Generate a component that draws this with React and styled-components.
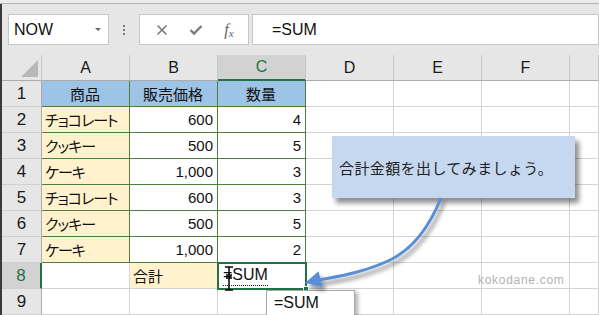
import React from 'react';
import styled, { createGlobalStyle } from 'styled-components';

const GlobalStyle = createGlobalStyle`
    html, body {
        margin: 0;
        padding: 0;
        background: #fff;
        overflow: hidden;
    }
    body {
        font-family: "Liberation Sans", Arial, sans-serif;
    }
`;

const GREEN = '#217346';
const TABLE_LINE = '#4f7d3c';
const GRID_LINE = '#d4d4d4';
const JP = '"Noto Sans CJK JP", "Liberation Sans", sans-serif';

const Frame = styled.div`
    position: relative;
    width: 599px;
    height: 315px;
    overflow: hidden;
    display: flex;
    flex-direction: column;
`;

const TopStrip = styled.div`
    height: 3px;
    background: #ebebeb;
    border-bottom: 1px solid #b3b3b3;
`;

const Body = styled.div`
    flex: 1;
    display: flex;
    flex-direction: column;
    border-left: 2px solid #3a3a3a;
    background: #e6e6e6;
`;

const Toolbar = styled.div`
    display: flex;
    align-items: stretch;
    height: 31px;
    padding: 10px 0 10px 6px;
`;

const NameBox = styled.div`
    width: 101px;
    box-sizing: border-box;
    background: #fff;
    border: 1px solid #c6c6c6;
    display: flex;
    align-items: center;
    justify-content: space-between;
    padding: 0 7px 0 5px;
    font-size: 16px;
    color: #111;
`;

const Caret = styled.span`
    width: 0;
    height: 0;
    border-left: 3px solid transparent;
    border-right: 3px solid transparent;
    border-top: 3px solid #666;
`;

const Grip = styled.div`
    width: 30px;
    display: flex;
    flex-direction: column;
    align-items: center;
    justify-content: center;
    gap: 2px;
    span {
        width: 2px;
        height: 2px;
        background: #7a7a7a;
    }
`;

const ButtonBox = styled.div`
    width: 110px;
    box-sizing: border-box;
    background: #fff;
    border: 1px solid #c6c6c6;
    display: flex;
    align-items: center;
    justify-content: space-around;
    padding: 0 4px 0 6px;
    margin-right: 3px;
    color: #7a7a7a;
`;

const Fx = styled.span`
    font-family: "Liberation Serif", "DejaVu Serif", serif;
    font-style: italic;
    font-size: 16px;
    color: #666;
    sub {
        font-size: 11px;
        vertical-align: -2px;
    }
`;

const FormulaBar = styled.div`
    flex: 1;
    box-sizing: border-box;
    background: #fff;
    border: 1px solid #c6c6c6;
    display: flex;
    align-items: center;
    padding-left: 19px;
    font-size: 16px;
    color: #111;
`;

const Sheet = styled.div`
    display: grid;
    grid-template-columns: 40px repeat(6, 88px) 1fr;
    grid-auto-rows: 26px;
    background: #fff;
`;

const ColHead = styled.div`
    box-sizing: border-box;
    display: flex;
    align-items: center;
    justify-content: center;
    font-size: 16px;
    background: ${p => (p.$active ? '#d2d2d2' : '#e6e6e6')};
    color: ${p => (p.$active ? GREEN : '#1a1a1a')};
    border-right: 1px solid #c8c8c8;
    border-bottom: ${p => (p.$active ? `2px solid ${GREEN}` : '1px solid #ababab')};
`;

const Corner = styled.div`
    box-sizing: border-box;
    background: #e6e6e6;
    border-right: 1px solid #c8c8c8;
    border-bottom: 1px solid #ababab;
    display: flex;
    align-items: flex-end;
    justify-content: flex-end;
    padding: 0 3px 3px 0;
    &::after {
        content: '';
        width: 0;
        height: 0;
        border-left: 17px solid transparent;
        border-bottom: 17px solid #b8b8b8;
    }
`;

const RowHead = styled.div`
    box-sizing: border-box;
    display: flex;
    align-items: center;
    justify-content: center;
    font-size: 17px;
    background: ${p => (p.$active ? '#d2d2d2' : '#e6e6e6')};
    color: ${p => (p.$active ? GREEN : '#1a1a1a')};
    border-right: ${p => (p.$active ? `2px solid ${GREEN}` : '1px solid #ababab')};
    border-bottom: 1px solid #d0d0d0;
`;

const Cell = styled.div`
    box-sizing: border-box;
    display: flex;
    align-items: center;
    justify-content: ${p => p.$align || 'flex-start'};
    padding: 0 4px 0 3px;
    white-space: nowrap;
    overflow: visible;
    font-family: ${p => (p.$jp ? JP : '"Liberation Sans", Arial, sans-serif')};
    font-feature-settings: "palt";
    letter-spacing: ${p => (p.$tight ? '-1px' : 'normal')};
    font-size: 15px;
    color: #111;
    background: ${p => p.$bg || '#fff'};
    border-right: 1px solid ${p => (p.$table ? TABLE_LINE : GRID_LINE)};
    border-bottom: 1px solid ${p => (p.$table ? TABLE_LINE : GRID_LINE)};
`;

const EditCell = styled(Cell)`
    position: relative;
    outline: 2px solid ${GREEN};
    outline-offset: -1px;
    padding-left: 5px;
    font-size: 16px;
    z-index: 1;
    &::after {
        content: '';
        position: absolute;
        right: -4px;
        bottom: -4px;
        width: 4px;
        height: 4px;
        background: ${GREEN};
        border: 1px solid #fff;
    }
`;

const Underlined = styled.span`
    border-bottom: 1px dotted #222;
    padding-bottom: 1px;
`;

const Callout = styled.div`
    position: absolute;
    left: 332px;
    top: 136px;
    width: 243px;
    height: 62px;
    box-sizing: border-box;
    background: #c6d8ef;
    box-shadow: 4px 5px 5px rgba(0, 0, 0, 0.45);
    display: flex;
    align-items: center;
    padding-left: 7px;
    font-family: ${JP};
    font-size: 15px;
    letter-spacing: 0.4px;
    color: #222;
    z-index: 2;
`;

const Overlay = styled.svg`
    position: absolute;
    left: 0;
    top: 0;
    pointer-events: none;
    z-index: 3;
`;

const Tooltip = styled.div`
    position: absolute;
    left: 266px;
    top: 290px;
    width: 89px;
    height: 30px;
    box-sizing: border-box;
    background: #fff;
    border: 1px solid #a9a9a9;
    box-shadow: 3px 2px 4px rgba(0, 0, 0, 0.3);
    padding: 3px 0 0 7px;
    font-size: 16px;
    color: #111;
    z-index: 2;
`;

const Watermark = styled.div`
    position: absolute;
    left: 478px;
    top: 273px;
    font-size: 12px;
    letter-spacing: 0.7px;
    color: #b2b2b2;
    z-index: 2;
`;

const columns = ['A', 'B', 'C', 'D', 'E', 'F', ''];

const items = [
    ['チョコレート', '600', '4'],
    ['クッキー', '500', '5'],
    ['ケーキ', '1,000', '3'],
    ['チョコレート', '600', '3'],
    ['クッキー', '500', '5'],
    ['ケーキ', '1,000', '2'],
];

function Blanks({ count }) {
    return Array.from({ length: count }, (_, i) => <Cell key={i} />);
}

export default function App() {
    return (
        <Frame>
            <GlobalStyle />
            <TopStrip />
            <Body>
                <Toolbar>
                    <NameBox>
                        NOW
                        <Caret />
                    </NameBox>
                    <Grip>
                        <span />
                        <span />
                        <span />
                    </Grip>
                    <ButtonBox>
                        <svg width="12" height="12" viewBox="0 0 12 12">
                            <path d="M1.5 1.5 L10.5 10.5 M10.5 1.5 L1.5 10.5" stroke="#7a7a7a" strokeWidth="1.6" />
                        </svg>
                        <svg width="14" height="12" viewBox="0 0 14 12">
                            <path d="M1.5 6 L5 9.5 L12.5 2" stroke="#7a7a7a" strokeWidth="2.4" fill="none" />
                        </svg>
                        <Fx>f<sub>x</sub></Fx>
                    </ButtonBox>
                    <FormulaBar>=SUM</FormulaBar>
                </Toolbar>

                <Sheet>
                    <Corner />
                    {columns.map((c, i) => (
                        <ColHead key={i} $active={c === 'C'}>{c}</ColHead>
                    ))}

                    <RowHead>1</RowHead>
                    <Cell $jp $table $bg="#9dc3e6" $align="center">商品</Cell>
                    <Cell $jp $table $bg="#9dc3e6" $align="center">販売価格</Cell>
                    <Cell $jp $table $bg="#9dc3e6" $align="center">数量</Cell>
                    <Blanks count={4} />

                    {items.map((row, i) => (
                        <React.Fragment key={i}>
                            <RowHead>{i + 2}</RowHead>
                            <Cell $jp $tight $table $bg="#fff2cc">{row[0]}</Cell>
                            <Cell $table $align="flex-end">{row[1]}</Cell>
                            <Cell $table $align="flex-end">{row[2]}</Cell>
                            <Blanks count={4} />
                        </React.Fragment>
                    ))}

                    <RowHead $active>8</RowHead>
                    <Cell />
                    <Cell $jp $bg="#fff2cc">合計</Cell>
                    <EditCell>
                        <Underlined>=SUM</Underlined>
                    </EditCell>
                    <Blanks count={4} />

                    <RowHead>9</RowHead>
                    <Blanks count={7} />
                </Sheet>
            </Body>

            <Callout>合計金額を出してみましょう。</Callout>
            <Tooltip>=SUM</Tooltip>
            <Watermark>kokodane.com</Watermark>

            <Overlay width="599" height="315" viewBox="0 0 599 315">
                <defs>
                    <filter id="arrowShadow" x="-20%" y="-20%" width="140%" height="140%">
                        <feDropShadow dx="3" dy="4" stdDeviation="2" floodColor="#000" floodOpacity="0.45" />
                    </filter>
                </defs>
                <g filter="url(#arrowShadow)">
                    <path
                        d="M441 198 C430 225 415 248 390 260 C365 272 340 276 319 280"
                        stroke="#5a8fd5"
                        strokeWidth="3"
                        fill="none"
                    />
                    <polygon points="305,283 318.6,271.3 322.4,287" fill="#5a8fd5" />
                </g>
                <g stroke="#000" strokeWidth="1.5" fill="none">
                    <path d="M225 267 H233 M229 267 V290 M225 290 H233 M226 275 H232 M226 278 H232" />
                </g>
            </Overlay>
        </Frame>
    );
}
